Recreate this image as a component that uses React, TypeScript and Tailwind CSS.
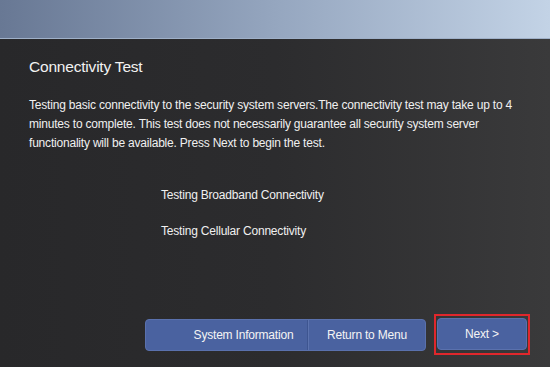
import React from 'react';

export default function App() {
  return (
    <div className="w-[550px] h-[367px] flex flex-col overflow-hidden bg-gradient-to-r from-[#28282a] via-[#2c2c2e] to-[#3a3a3b] font-['Liberation_Sans',Arial,sans-serif] text-white">
      {/* header strip */}
      <div className="h-[38px] shrink-0 bg-gradient-to-r from-[#687894] via-[#95a6bf] to-[#c3d3e6]" />
      <div className="h-px shrink-0 bg-[#9fb0c8]" />

      <div className="flex-1 flex flex-col px-[29px] pt-[18px]">
        <h1 className="text-[15.5px] leading-[20px] text-[#f2f2f2] tracking-[-0.2px]">Connectivity Test</h1>
        <p className="mt-[19px] text-[12px] leading-[19px] text-[#f0f0f0] tracking-[-0.2px]">
          Testing basic connectivity to the security system servers.The connectivity test may take up to 4 minutes to complete. This test does not necessarily guarantee all security system server functionality will be available. Press Next to begin the test.
        </p>

        <div className="mt-[33px] pl-[132px] flex flex-col gap-[17px] text-[12px] leading-[19px] text-[#f0f0f0] tracking-[-0.2px]">
          <div>Testing Broadband Connectivity</div>
          <div>Testing Cellular Connectivity</div>
        </div>
      </div>

      <div className="mb-[12px] pl-[145px] flex items-center text-[12px] tracking-[-0.2px] text-[#f4f4f4]">
        <div className="shrink-0 flex h-[32px] w-[281px] rounded-[4px] bg-[#4a62a0] border border-[#5a71ad] overflow-hidden">
          <button className="w-[162px] pl-[34px] flex items-center justify-center border-r border-[#3e5590]">System Information</button>
          <button className="flex-1 flex items-center justify-center border-l border-[#5c73ae]">Return to Menu</button>
        </div>
        <div className="shrink-0 ml-[8px] pt-[2px] pb-[3px] px-[1px] border-2 border-[#e0272c]">
          <button className="w-[90px] h-[32px] rounded-[4px] bg-[#4a62a0] border border-[#5a71ad] flex items-center justify-center">Next &gt;</button>
        </div>
      </div>
    </div>
  );
}
